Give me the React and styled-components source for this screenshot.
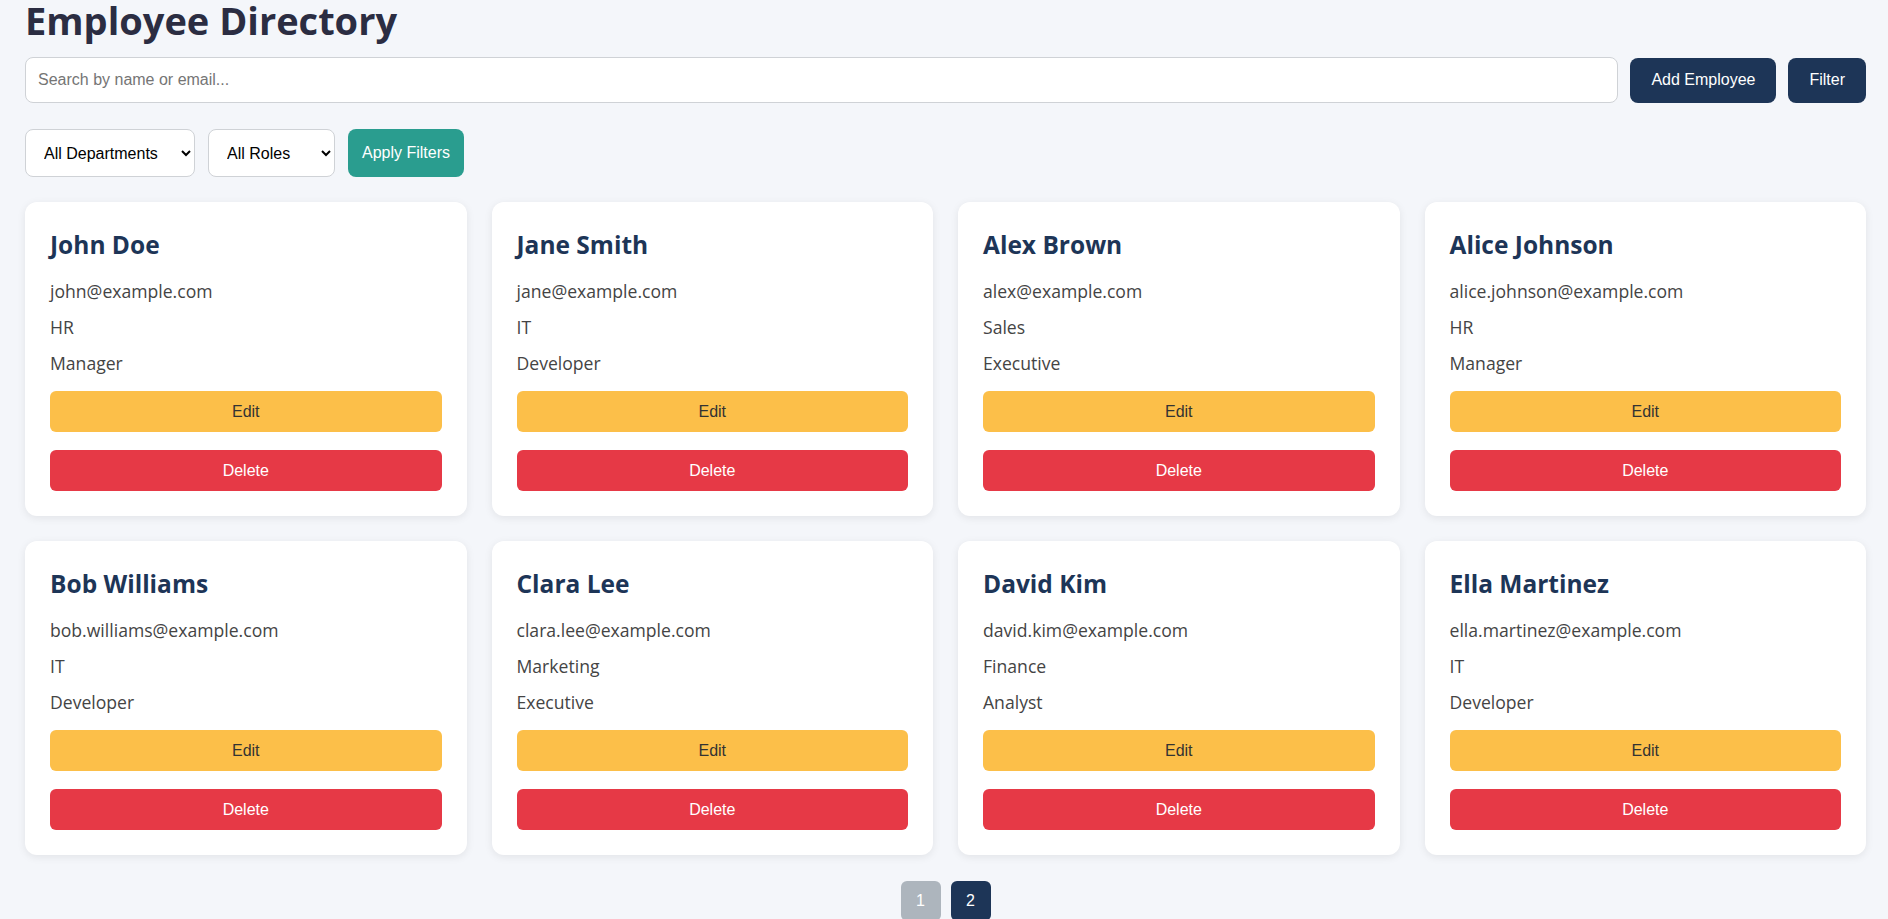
import React from "react";
import styled, { createGlobalStyle } from "styled-components";

const GlobalStyle = createGlobalStyle`
  html, body { margin: 0; padding: 0; background: #f4f6fa; }
  body { font-family: "Open Sans", "Noto Sans", sans-serif; }
  * { box-sizing: border-box; }
`;

const Page = styled.div`
  min-height: 100vh;
  padding: 0 22px 40px 25px;
  background: #f4f6fa;
  border-radius: 10px;
`;

const Title = styled.h1`
  margin: 0 0 17px;
  font-family: "Open Sans", "Noto Sans", sans-serif;
  font-weight: 700;
  font-size: 38px;
  line-height: 40px;
  color: #2b2d42;
`;

const Toolbar = styled.div`
  display: flex;
  align-items: center;
  gap: 12px;
`;

const SearchInput = styled.input`
  flex: 1;
  height: 46px;
  padding: 0 12px;
  border: 1px solid #cfd2d6;
  border-radius: 8px;
  background: #fff;
  font-family: "Liberation Sans", Arial, sans-serif;
  font-size: 16px;
  color: #333;
  outline: none;
  &::placeholder { color: #757575; }
`;

const Button = styled.button`
  height: ${(p) => p.$h || 45}px;
  padding: 0 ${(p) => p.$px ?? 21}px;
  border: none;
  border-radius: ${(p) => p.$r || 8}px;
  background: ${(p) => p.$bg};
  color: ${(p) => p.$fg || "#fff"};
  font-family: "Liberation Sans", Arial, sans-serif;
  font-size: 16px;
  cursor: pointer;
  width: ${(p) => (p.$block ? "100%" : p.$w ? `${p.$w}px` : "auto")};
  flex-shrink: 0;
`;

const FilterRow = styled.div`
  display: flex;
  align-items: center;
  gap: 13px;
  margin-top: 26px;
`;

const Select = styled.select`
  height: 48px;
  padding: 0 10px 0 14px;
  border: 1px solid #cfd2d6;
  border-radius: 8px;
  background: #fff;
  color: #000;
  font-family: "Liberation Sans", Arial, sans-serif;
  font-size: 16px;
  width: ${(p) => p.$w}px;
`;

const Grid = styled.div`
  display: grid;
  grid-template-columns: repeat(4, 1fr);
  column-gap: 25px;
  row-gap: 25px;
  margin-top: 25px;
`;

const Card = styled.div`
  background: #fff;
  border-radius: 12px;
  padding: 25px;
  box-shadow: 0 2px 8px rgba(0, 0, 0, 0.08);
  display: flex;
  flex-direction: column;
`;

const Name = styled.h3`
  margin: 3px 0 0;
  font-family: "Open Sans", "Noto Sans", sans-serif;
  font-weight: 700;
  font-size: 24.5px;
  line-height: 30px;
  color: #1d3557;
`;

const InfoList = styled.div`
  margin: 13px 0 10px;
  display: flex;
  flex-direction: column;
`;

const Info = styled.p`
  margin: 0;
  font-family: "Open Sans", "Noto Sans", sans-serif;
  font-size: 17.6px;
  line-height: 36px;
  color: #444;
`;

const CardActions = styled.div`
  display: flex;
  flex-direction: column;
  gap: 18px;
`;

const Pagination = styled.div`
  display: flex;
  justify-content: center;
  gap: 10px;
  margin-top: 26px;
`;

const employees = [
  { name: "John Doe", email: "john@example.com", dept: "HR", role: "Manager" },
  { name: "Jane Smith", email: "jane@example.com", dept: "IT", role: "Developer" },
  { name: "Alex Brown", email: "alex@example.com", dept: "Sales", role: "Executive" },
  { name: "Alice Johnson", email: "alice.johnson@example.com", dept: "HR", role: "Manager" },
  { name: "Bob Williams", email: "bob.williams@example.com", dept: "IT", role: "Developer" },
  { name: "Clara Lee", email: "clara.lee@example.com", dept: "Marketing", role: "Executive" },
  { name: "David Kim", email: "david.kim@example.com", dept: "Finance", role: "Analyst" },
  { name: "Ella Martinez", email: "ella.martinez@example.com", dept: "IT", role: "Developer" },
];

export default function App() {
  return (
    <>
      <GlobalStyle />
      <Page>
        <Title>Employee Directory</Title>
        <Toolbar>
          <SearchInput placeholder="Search by name or email..." />
          <Button $bg="#1d3557">Add Employee</Button>
          <Button $bg="#1d3557">Filter</Button>
        </Toolbar>
        <FilterRow>
          <Select $w={170} defaultValue="">
            <option value="">All Departments</option>
            <option>HR</option>
            <option>IT</option>
            <option>Sales</option>
          </Select>
          <Select $w={127} defaultValue="">
            <option value="">All Roles</option>
            <option>Manager</option>
            <option>Developer</option>
          </Select>
          <Button $bg="#2a9d8f" $h={48} $px={14}>Apply Filters</Button>
        </FilterRow>
        <Grid>
          {employees.map((e) => (
            <Card key={e.email}>
              <Name>{e.name}</Name>
              <InfoList>
                <Info>{e.email}</Info>
                <Info>{e.dept}</Info>
                <Info>{e.role}</Info>
              </InfoList>
              <CardActions>
                <Button $block $h={41} $r={6} $bg="#fcbf49" $fg="#333">Edit</Button>
                <Button $block $h={41} $r={6} $bg="#e63946">Delete</Button>
              </CardActions>
            </Card>
          ))}
        </Grid>
        <Pagination>
          <Button $h={40} $px={0} $w={40} $r={6} $bg="#adb5bd">1</Button>
          <Button $h={40} $px={0} $w={40} $r={6} $bg="#1d3557">2</Button>
        </Pagination>
      </Page>
    </>
  );
}
